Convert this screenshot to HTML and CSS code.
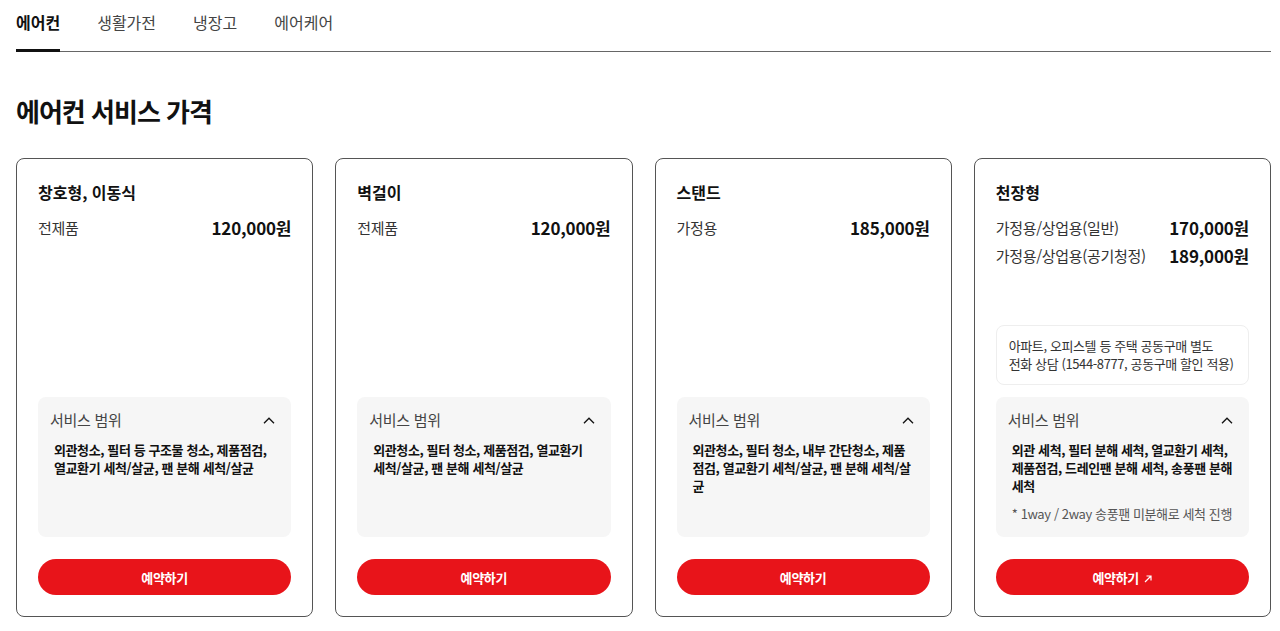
FILE: index.html
```html
<!DOCTYPE html>
<html lang="ko">
<head>
  <meta charset="UTF-8" />
  <meta name="viewport" content="width=device-width, initial-scale=1" />
  <title>에어컨 서비스 가격</title>
  <link rel="stylesheet" href="styles.css">
</head>
<body>

<nav class="tabs">
  <a class="tab active" href="#">에어컨</a>
  <a class="tab" href="#">생활가전</a>
  <a class="tab" href="#">냉장고</a>
  <a class="tab" href="#">에어케어</a>
</nav>

<h1 class="pageTitle">에어컨 서비스 가격</h1>

<div class="cards">

  <div class="card">
    <h2>창호형, 이동식</h2>
    <div class="priceRow"><span>전제품</span><strong>120,000원</strong></div>
    <div class="scope">
      <div class="scopeHead">서비스 범위
        <svg class="chev" width="12" height="7" viewBox="0 0 12 7"><path d="M1 6.2 6 1.2l5 5" fill="none" stroke="#111" stroke-width="1.3"/></svg>
      </div>
      <p>외관청소, 필터 등 구조물 청소, 제품점검, 열교환기 세척/살균, 팬 분해 세척/살균</p>
    </div>
    <button class="bookBtn">예약하기</button>
  </div>

  <div class="card">
    <h2>벽걸이</h2>
    <div class="priceRow"><span>전제품</span><strong>120,000원</strong></div>
    <div class="scope">
      <div class="scopeHead">서비스 범위
        <svg class="chev" width="12" height="7" viewBox="0 0 12 7"><path d="M1 6.2 6 1.2l5 5" fill="none" stroke="#111" stroke-width="1.3"/></svg>
      </div>
      <p>외관청소, 필터 청소, 제품점검, 열교환기 세척/살균, 팬 분해 세척/살균</p>
    </div>
    <button class="bookBtn">예약하기</button>
  </div>

  <div class="card">
    <h2>스탠드</h2>
    <div class="priceRow"><span>가정용</span><strong>185,000원</strong></div>
    <div class="scope">
      <div class="scopeHead">서비스 범위
        <svg class="chev" width="12" height="7" viewBox="0 0 12 7"><path d="M1 6.2 6 1.2l5 5" fill="none" stroke="#111" stroke-width="1.3"/></svg>
      </div>
      <p>외관청소, 필터 청소, 내부 간단청소, 제품점검, 열교환기 세척/살균, 팬 분해 세척/살균</p>
    </div>
    <button class="bookBtn">예약하기</button>
  </div>

  <div class="card">
    <h2>천장형</h2>
    <div class="priceRow"><span>가정용/상업용(일반)</span><strong>170,000원</strong></div>
    <div class="priceRow"><span>가정용/상업용(공기청정)</span><strong>189,000원</strong></div>
    <div class="notice">아파트, 오피스텔 등 주택 공동구매 별도<br>전화 상담 (1544-8777, 공동구매 할인 적용)</div>
    <div class="scope">
      <div class="scopeHead">서비스 범위
        <svg class="chev" width="12" height="7" viewBox="0 0 12 7"><path d="M1 6.2 6 1.2l5 5" fill="none" stroke="#111" stroke-width="1.3"/></svg>
      </div>
      <p>외관 세척, 필터 분해 세척, 열교환기 세척, 제품점검, 드레인팬 분해 세척, 송풍팬 분해 세척</p>
      <p class="note">* 1way / 2way 송풍팬 미분해로 세척 진행</p>
    </div>
    <button class="bookBtn">예약하기
      <svg class="ext" width="8" height="8" viewBox="0 0 8 8"><path d="M1 7 7 1M2.5 1H7v4.5" fill="none" stroke="#fff" stroke-width="1.2"/></svg>
    </button>
  </div>

</div>

</body>
</html>
```

FILE: styles.css
```css
body {
  font-family: "Noto Sans CJK KR", "Noto Sans", sans-serif;
  background: #fff;
  color: #111;
  margin: 0;
  padding: 0 9px 0 16px;
}
.tabs {
  display: flex;
  gap: 37px;
  border-bottom: 1px solid #666;
}
.tab {
  font-size: 16px;
  line-height: 24px;
  padding: 10px 0 15px;
  margin-bottom: -1px;
  border-bottom: 3px solid transparent;
  color: #444;
  text-decoration: none;
}
.tab.active {
  color: #111;
  font-weight: bold;
  border-bottom-color: #111;
}
.pageTitle {
  font-size: 26px;
  line-height: 40px;
  letter-spacing: -1px;
  margin: 39px 0 27px;
}
.cards {
  display: grid;
  grid-template-columns: repeat(4, 1fr);
  gap: 22px;
}
.card {
  display: flex;
  flex-direction: column;
  min-height: 459px;
  box-sizing: border-box;
  border: 1px solid #555;
  border-radius: 8px;
  padding: 21px;
}
.card h2 {
  font-size: 16px;
  line-height: 24px;
  margin: 0 0 12px;
}
.priceRow {
  display: flex;
  justify-content: space-between;
  align-items: center;
  line-height: 24px;
  margin-bottom: 4px;
}
.priceRow span {
  font-size: 15px;
  letter-spacing: -0.3px;
  color: #333;
}
.priceRow strong {
  font-size: 17px;
  letter-spacing: -0.2px;
}
.notice {
  margin-top: auto;
  border: 1px solid #eee;
  border-radius: 8px;
  padding: 11px 12px;
  font-size: 13px;
  line-height: 18px;
  letter-spacing: -0.4px;
  color: #333;
}
.scope {
  margin-top: auto;
  height: 140px;
  box-sizing: border-box;
  background: #f6f6f6;
  border-radius: 8px;
  padding: 11px 12px;
}
.notice + .scope {
  margin-top: 12px;
}
.scopeHead {
  display: flex;
  justify-content: space-between;
  align-items: center;
  font-size: 15px;
  line-height: 24px;
  letter-spacing: -0.3px;
  color: #444;
  padding-right: 4px;
}
.scope p {
  margin: 9px 0 0;
  padding: 0 3px 0 4px;
  font-size: 13px;
  line-height: 18px;
  letter-spacing: -0.4px;
  font-weight: bold;
  color: #111;
}
.scope p.note {
  margin-top: 10px;
  font-weight: normal;
  color: #555;
}
.bookBtn {
  margin-top: 22px;
  height: 36px;
  border: none;
  border-radius: 18px;
  background: #e8141a;
  color: #fff;
  font-family: inherit;
  font-size: 13px;
  font-weight: bold;
  letter-spacing: -0.3px;
  cursor: pointer;
}
.bookBtn .ext {
  margin-left: 2px;
}
```
